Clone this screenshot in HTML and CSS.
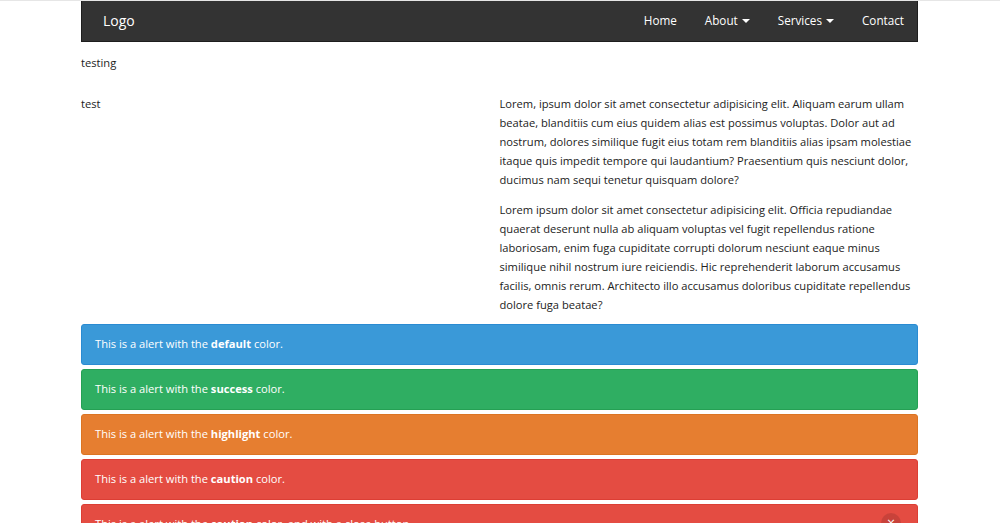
FILE: index.html
```html
<!DOCTYPE html>
<html lang="en">
<head>
<meta charset="utf-8">
<title>Page</title>
<link rel="stylesheet" href="styles.css">
</head>
<body>
<div class="container">
  <nav class="navbar">
    <a class="logo" href="#">Logo</a>
    <ul class="nav">
      <li><a href="#">Home</a></li>
      <li><a href="#">About <span class="caret"></span></a></li>
      <li><a href="#">Services <span class="caret"></span></a></li>
      <li><a href="#">Contact</a></li>
    </ul>
  </nav>
  <p class="intro">testing</p>
  <div class="row">
    <div class="col"><p>test</p></div>
    <div class="col">
      <p>Lorem, ipsum dolor sit amet consectetur adipisicing elit. Aliquam earum ullam beatae, blanditiis cum eius quidem alias est possimus voluptas. Dolor aut ad nostrum, dolores similique fugit eius totam rem blanditiis alias ipsam molestiae itaque quis impedit tempore qui laudantium? Praesentium quis nesciunt dolor, ducimus nam sequi tenetur quisquam dolore?</p>
      <p>Lorem ipsum dolor sit amet consectetur adipisicing elit. Officia repudiandae quaerat deserunt nulla ab aliquam voluptas vel fugit repellendus ratione laboriosam, enim fuga cupiditate corrupti dolorum nesciunt eaque minus similique nihil nostrum iure reiciendis. Hic reprehenderit laborum accusamus facilis, omnis rerum. Architecto illo accusamus doloribus cupiditate repellendus dolore fuga beatae?</p>
    </div>
  </div>
  <div class="alert alert-default">This is a alert with the <strong>default</strong> color.</div>
  <div class="alert alert-success">This is a alert with the <strong>success</strong> color.</div>
  <div class="alert alert-highlight">This is a alert with the <strong>highlight</strong> color.</div>
  <div class="alert alert-caution">This is a alert with the <strong>caution</strong> color.</div>
  <div class="alert alert-caution alert-close">This is a alert with the <strong>caution</strong> color, and with a close button.<button class="close" type="button">&times;</button></div>
</div>
</body>
</html>
```

FILE: styles.css
```css
html, body {
  margin: 0;
  padding: 0;
}
body {
  border-top: 1px solid #e6e6e6;
  padding-right: 1px;
  font-family: "Open Sans", "DejaVu Sans", sans-serif;
  font-size: 11.15px;
  color: #222;
  background: #fff;
}
.container {
  width: 837px;
  margin: 0 auto;
}
.navbar {
  display: flex;
  align-items: center;
  justify-content: space-between;
  height: 38px;
  padding-bottom: 2px;
  background: #333;
  border: 1px solid #1e1e1e;
  border-top: 0;
}
.logo {
  color: #fff;
  text-decoration: none;
  font-size: 14px;
  padding-left: 21px;
}
.nav {
  display: flex;
  list-style: none;
  margin: 0;
  padding: 0 13px 0 0;
  gap: 28px;
}
.nav a {
  color: #fff;
  text-decoration: none;
  font-size: 11.7px;
  display: flex;
  align-items: center;
  gap: 4px;
}
.caret {
  display: inline-block;
  width: 0;
  height: 0;
  border-left: 4px solid transparent;
  border-right: 4px solid transparent;
  border-top: 4px solid #fff;
  margin-top: 1px;
}
p {
  margin: 0 0 11px;
  line-height: 19px;
}
.intro {
  margin: 11px 0 22px;
}
.row {
  display: grid;
  grid-template-columns: 1fr 1fr;
}
.col p:last-child {
  margin-bottom: 10px;
}
.alert {
  position: relative;
  color: #fff;
  padding: 11px 13px 13px;
  line-height: 15px;
  border: 1px solid;
  border-radius: 3px;
  margin-bottom: 4px;
}
.alert strong {
  font-weight: 700;
}
.alert-default {
  background: #3a99d8;
  border-color: #2a8bd2;
}
.alert-success {
  background: #2fae62;
  border-color: #25a054;
}
.alert-highlight {
  background: #e67e30;
  border-color: #dc7422;
}
.alert-caution {
  background: #e44c42;
  border-color: #dc3e34;
}
.alert-close {
  padding-right: 40px;
}
.close {
  position: absolute;
  right: 16px;
  top: 8px;
  width: 20px;
  height: 20px;
  border-radius: 50%;
  border: 0;
  padding: 0;
  background: rgba(0, 0, 0, 0.12);
  color: #fff;
  font-size: 14px;
  line-height: 20px;
  font-family: "Open Sans", sans-serif;
  cursor: pointer;
}
```
